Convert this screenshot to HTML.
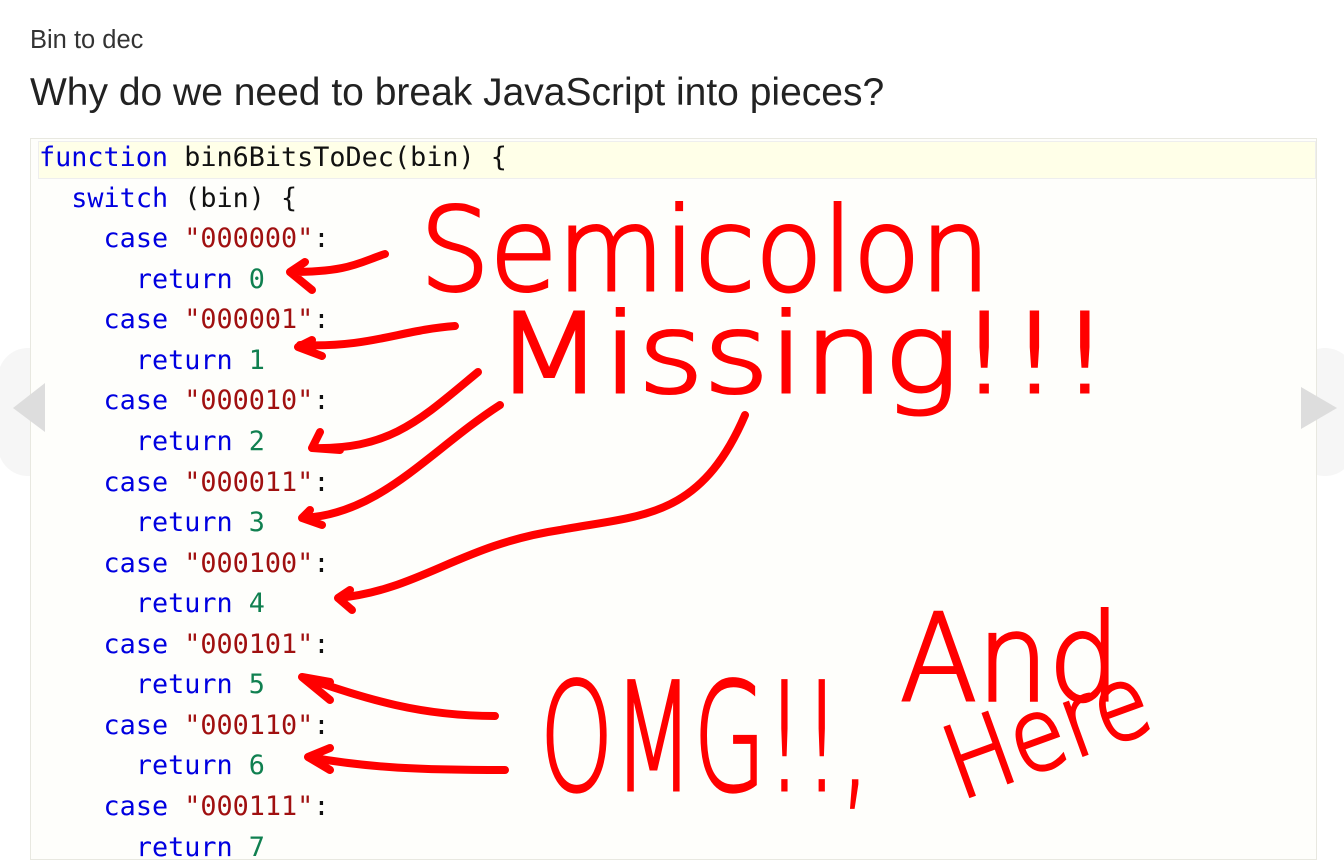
<!DOCTYPE html>
<html><head><style>
body{margin:0;width:1344px;height:840px;overflow:hidden;background:#fff;position:relative;font-family:"Liberation Sans",sans-serif}
.t1{position:absolute;left:30px;top:26px;font-size:25.5px;color:#333}
.t2{position:absolute;left:30px;top:71px;font-size:39px;color:#222}
.code{position:absolute;left:30px;top:138px;width:1285px;height:720px;background:#fefefb;border:1px solid #e8e8e0}
.hl{position:absolute;left:7px;top:2px;width:1276px;height:36px;background:#ffffe8;border:1px solid #eee}
pre{position:absolute;left:8px;top:-1px;margin:0;font-family:"DejaVu Sans Mono",monospace;font-size:26.8px;line-height:40.56px;color:#111}
.k{color:#0000e0}.s{color:#a01010}.n{color:#108050}
.nav{position:absolute;top:348px;width:60px;height:128px;background:#f6f6f6;border-radius:30px}
svg{position:absolute;left:0;top:0}
</style></head><body>
<div class="t1">Bin to dec</div>
<div class="t2">Why do we need to break JavaScript into pieces?</div>
<div class="nav" style="left:-2px"></div>
<div class="nav" style="left:1295px"></div>
<div class="code"><div class="hl"></div>
<pre><span class="k">function</span> bin6BitsToDec(bin) {
  <span class="k">switch</span> (bin) {
    <span class="k">case</span> <span class="s">"000000"</span>:
      <span class="k">return</span> <span class="n">0</span>
    <span class="k">case</span> <span class="s">"000001"</span>:
      <span class="k">return</span> <span class="n">1</span>
    <span class="k">case</span> <span class="s">"000010"</span>:
      <span class="k">return</span> <span class="n">2</span>
    <span class="k">case</span> <span class="s">"000011"</span>:
      <span class="k">return</span> <span class="n">3</span>
    <span class="k">case</span> <span class="s">"000100"</span>:
      <span class="k">return</span> <span class="n">4</span>
    <span class="k">case</span> <span class="s">"000101"</span>:
      <span class="k">return</span> <span class="n">5</span>
    <span class="k">case</span> <span class="s">"000110"</span>:
      <span class="k">return</span> <span class="n">6</span>
    <span class="k">case</span> <span class="s">"000111"</span>:
      <span class="k">return</span> <span class="n">7</span></pre></div>
<svg width="1344" height="840">
<polygon points="45,383 13,408 45,432" fill="#ddd"/>
<polygon points="1301,387 1337,408 1301,429" fill="#ddd"/>
<g fill="none" stroke="#f00" stroke-width="8" stroke-linecap="round" stroke-linejoin="round">
<path d="M385,254 C360,262 350,272 290,272 M305,262 L290,272 L312,290"/>
<path d="M455,326 C400,330 370,348 300,345 M312,340 L298,347 L322,356"/>
<path d="M478,372 C420,420 390,450 312,448 M320,432 L312,448 L340,450"/>
<path d="M500,405 C430,450 380,515 302,518 M310,510 L302,518 L322,525"/>
<path d="M745,415 C700,520 640,515 560,530 C460,545 420,590 338,598 M350,590 L338,598 L352,610"/>
<path d="M495,716 C420,716 370,700 302,677 M330,682 L302,677 L330,700"/>
<path d="M505,770 C420,770 370,768 308,757 M330,748 L308,757 L330,770"/>
</g>
<g fill="#f00" stroke="#f00" stroke-width="3" font-family="DejaVu Sans,sans-serif" font-weight="200">
<text x="420" y="290" font-size="115" textLength="570" lengthAdjust="spacingAndGlyphs">Semicolon</text>
<text x="495" y="392" font-size="110" textLength="615" lengthAdjust="spacingAndGlyphs">Missing!!!</text>
<text x="540" y="790" font-size="150" textLength="330" lengthAdjust="spacingAndGlyphs">OMG!!,</text>
<text x="900" y="700" font-size="120" textLength="220" lengthAdjust="spacingAndGlyphs">And</text>
<text x="960" y="800" font-size="100" transform="rotate(-20 960 800)" textLength="210" lengthAdjust="spacingAndGlyphs">Here</text>
</g>
</svg>
</body></html>
